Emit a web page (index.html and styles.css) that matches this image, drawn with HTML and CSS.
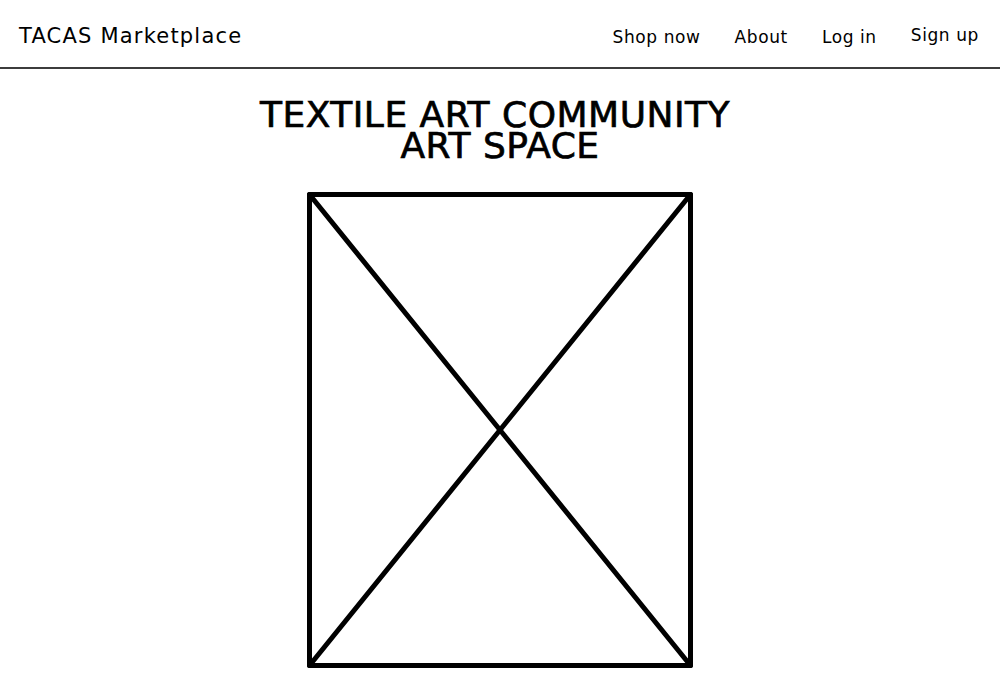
FILE: index.html
```html
<!DOCTYPE html>
<html lang="en">
<head>
<meta charset="utf-8">
<title>TACAS Marketplace</title>
<link rel="stylesheet" href="styles.css">
</head>
<body>
<header class="topbar">
  <a class="brand" href="#">TACAS Marketplace</a>
  <nav class="nav">
    <a class="nav-link" href="#">Shop now</a>
    <a class="nav-link" href="#">About</a>
    <a class="nav-link" href="#">Log in</a>
    <a class="nav-link nav-signup" href="#">Sign up</a>
  </nav>
</header>
<main class="hero">
  <h1 class="hero-title"><span class="title-line title-line-first">TEXTILE ART COMMUNITY</span><span class="title-line">ART SPACE</span></h1>
  <div class="placeholder">
    <svg width="386" height="476" viewBox="0 0 386 476" aria-hidden="true">
      <g fill="none" stroke="#000" stroke-width="5" stroke-linecap="round" stroke-linejoin="round">
        <rect x="2.5" y="2.5" width="381" height="471"/>
        <line x1="2.5" y1="2.5" x2="383.5" y2="473.5"/>
        <line x1="383.5" y1="2.5" x2="2.5" y2="473.5"/>
      </g>
    </svg>
  </div>
</main>
</body>
</html>
```
FILE: styles.css
```css
html, body {
  margin: 0;
  padding: 0;
  background: #fff;
  color: #000;
  font-family: "DejaVu Sans", "Liberation Sans", sans-serif;
}

.topbar {
  display: flex;
  align-items: center;
  justify-content: space-between;
  height: 67px;
  padding: 0 21px 0 19px;
  border-bottom: 2px solid #3c3c3c;
}

.brand {
  color: #000;
  text-decoration: none;
  font-size: 21px;
  letter-spacing: 1.2px;
  padding-top: 4px;
}

.nav {
  display: flex;
  align-items: center;
  gap: 34px;
}

.nav-link {
  color: #000;
  text-decoration: none;
  font-size: 17px;
  letter-spacing: 0.6px;
  padding-top: 7px;
}

.nav-signup {
  padding-top: 2px;
}

.hero {
  display: flex;
  flex-direction: column;
  align-items: center;
}

.hero-title {
  margin: 30px 0 0;
  font-size: 36px;
  font-weight: normal;
  letter-spacing: 0.5px;
  line-height: 31px;
  text-align: center;
  -webkit-text-stroke: 0.7px #000;
}

.title-line {
  display: block;
}

.title-line-first {
  padding-right: 10px;
}

.placeholder {
  margin-top: 31px;
  display: flex;
}

.placeholder svg {
  display: block;
}
```
